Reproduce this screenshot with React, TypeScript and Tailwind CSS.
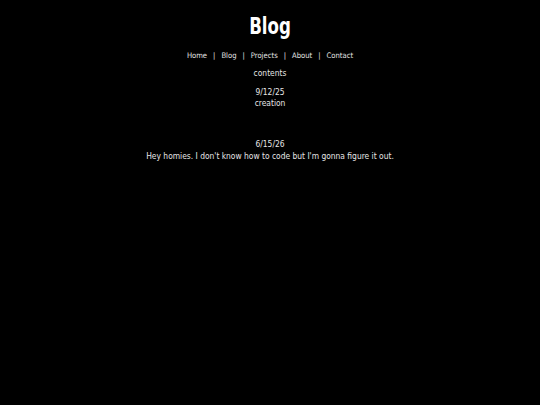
export default function App() {
  return (
    <div className="min-h-[405px] w-full bg-black text-[#e6e6e6] flex flex-col items-center text-center" style={{ fontFamily: '"DejaVu Sans Condensed", "DejaVu Sans", Verdana, sans-serif' }}>
      <h1 className="mt-[12px] text-white text-[18.5px] leading-[28px] font-bold scale-y-[1.28]">Blog</h1>
      <nav className="mt-[10px] text-[7.6px] leading-[12px] flex gap-[6px]">
        <span>Home</span><span>|</span><span>Blog</span><span>|</span><span>Projects</span><span>|</span><span>About</span><span>|</span><span>Contact</span>
      </nav>
      <div className="mt-[5px] text-[8.4px] leading-[12px]">contents</div>
      <div className="mt-[8px] text-[8.4px] leading-[11px]">9/12/25</div>
      <div className="text-[8.4px] leading-[11px]">creation</div>
      <div className="mt-[30px] text-[8.4px] leading-[11px]">6/15/26</div>
      <div className="text-[8.4px] leading-[12px]">Hey homies. I don't know how to code but I'm gonna figure it out.</div>
    </div>
  );
}
